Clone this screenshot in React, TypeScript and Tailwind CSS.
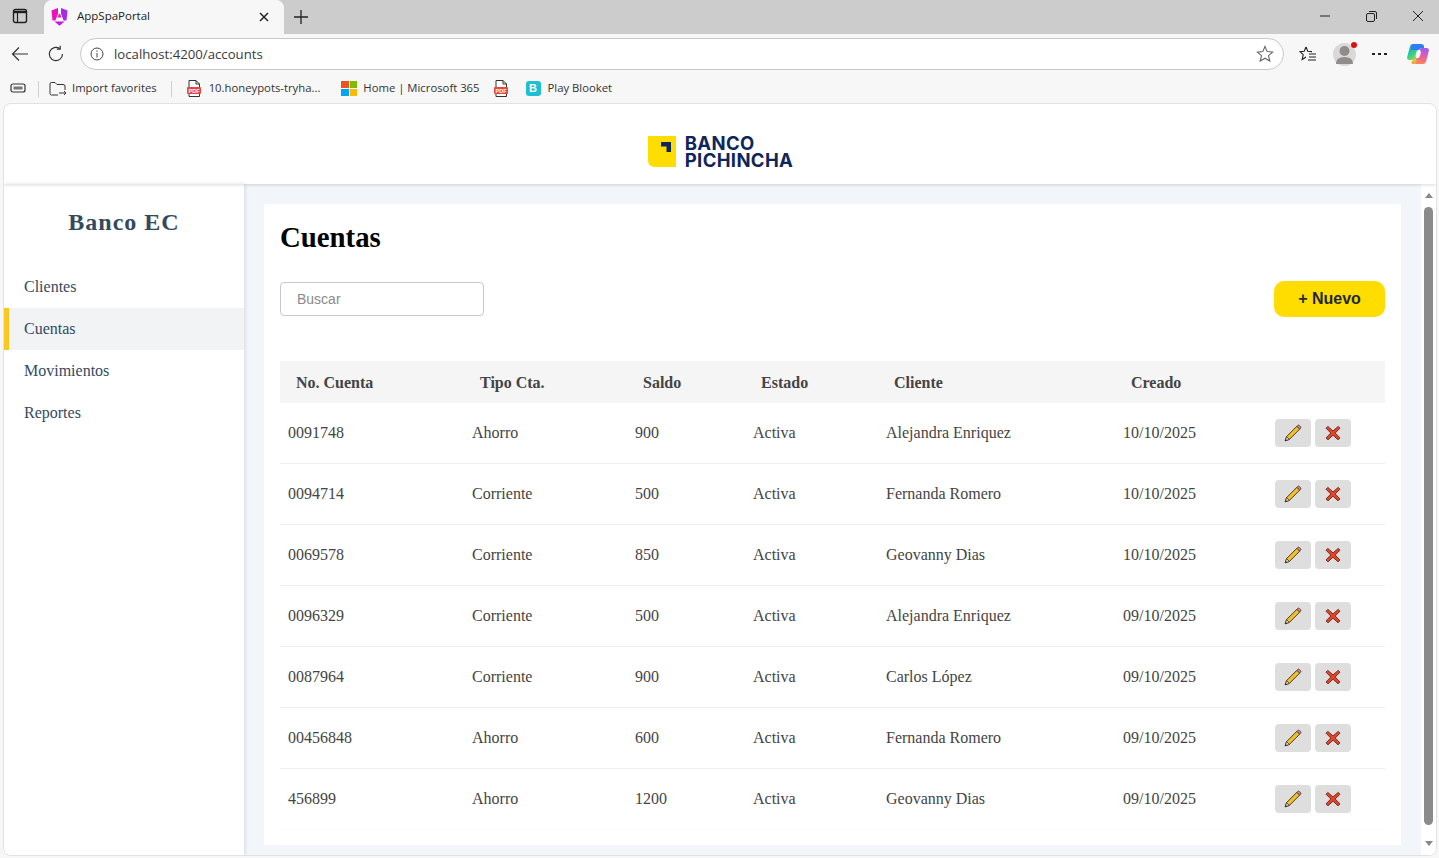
import React from 'react';

const accounts = [
  { no: '0091748', tipo: 'Ahorro', saldo: '900', cliente: 'Alejandra Enriquez', creado: '10/10/2025' },
  { no: '0094714', tipo: 'Corriente', saldo: '500', cliente: 'Fernanda Romero', creado: '10/10/2025' },
  { no: '0069578', tipo: 'Corriente', saldo: '850', cliente: 'Geovanny Dias', creado: '10/10/2025' },
  { no: '0096329', tipo: 'Corriente', saldo: '500', cliente: 'Alejandra Enriquez', creado: '09/10/2025' },
  { no: '0087964', tipo: 'Corriente', saldo: '900', cliente: 'Carlos López', creado: '09/10/2025' },
  { no: '00456848', tipo: 'Ahorro', saldo: '600', cliente: 'Fernanda Romero', creado: '09/10/2025' },
  { no: '456899', tipo: 'Ahorro', saldo: '1200', cliente: 'Geovanny Dias', creado: '09/10/2025' },
];

const PencilIcon = () => (
  <svg width="18" height="18" viewBox="0 0 18 18">
    <path d="M1.2 16.8 L2.6 12.6 L12.9 2.3 L15.7 5.1 L5.4 15.4 Z" fill="#f6c026" stroke="#2a2a2a" strokeWidth=".9" strokeLinejoin="round" />
    <path d="M12.9 2.3 L14 1.2 Q14.6 .8 15.2 1.3 L16.7 2.8 Q17.2 3.4 16.8 4 L15.7 5.1 Z" fill="#e8808a" stroke="#2a2a2a" strokeWidth=".7" />
    <path d="M1.2 16.8 L2.6 12.6 L5.4 15.4 Z" fill="#f3d6a8" stroke="#2a2a2a" strokeWidth=".7" />
    <path d="M1.1 16.9 L1.7 15.2 L2.8 16.3 Z" fill="#222" />
  </svg>
);

const CrossIcon = () => (
  <svg width="18" height="18" viewBox="0 0 18 18">
    <path d="M3.8 2.4 L9 6.9 L14.2 2.4 L16 4.2 L11.2 9 L16 13.9 L14 15.8 L9 11.2 L4 15.8 L2 13.9 L6.8 9 L2 4.2 Z" fill="#e0452a" stroke="#6b2416" strokeWidth=".9" strokeLinejoin="round" />
  </svg>
);

const AngularIcon = () => (
  <svg width="17" height="18" viewBox="0 0 17 18">
    <defs>
      <linearGradient id="ng" x1="0" y1="0" x2="1" y2="1">
        <stop offset="0" stopColor="#e40ac8" />
        <stop offset="0.55" stopColor="#c41be0" />
        <stop offset="1" stopColor="#f3273f" />
      </linearGradient>
    </defs>
    <path d="M10 0 L16.5 2.6 L15.5 12.4 L12.6 12.4 L10 5.8 Z" fill="#a52be8" />
    <path d="M7 0 L.5 2.6 L1.5 12.4 L4.4 12.4 L7 5.8 Z" fill="#ee12b6" />
    <path d="M8.5 4 L6.6 9.6 L10.4 9.6 Z" fill="#f01e9b" />
    <path d="M3.4 13.4 L13.6 13.4 L8.5 17.8 Z" fill="url(#ng)" />
    <path d="M8.5 1 L7 5.8 L10 5.8 Z" fill="#fff" />
  </svg>
);

const PdfIcon = () => (
  <svg width="16" height="17" viewBox="0 0 16 17">
    <path d="M3 .5 H10 L13.5 4 V16.5 H3 Z" fill="#fff" stroke="#333" strokeWidth="1" />
    <path d="M10 .5 V4 H13.5" fill="none" stroke="#333" strokeWidth="1" />
    <rect x="1" y="7" width="14" height="7" rx="1" fill="#e2483f" />
    <text x="8" y="12.5" textAnchor="middle" fontSize="5.5" fontWeight="700" fill="#fff" fontFamily="Liberation Sans, sans-serif">PDF</text>
  </svg>
);

const CopilotIcon = () => (
  <svg width="24" height="24" viewBox="0 0 24 24">
    <defs>
      <linearGradient id="cpa" x1="0" y1="0" x2="0.6" y2="1">
        <stop offset="0" stopColor="#1f93e6" />
        <stop offset="0.6" stopColor="#2fcf8a" />
        <stop offset="1" stopColor="#a6d94a" />
      </linearGradient>
      <linearGradient id="cpb" x1="0.6" y1="0" x2="0.4" y2="1">
        <stop offset="0" stopColor="#9b5cf0" />
        <stop offset="0.6" stopColor="#f0609a" />
        <stop offset="1" stopColor="#f78a5a" />
      </linearGradient>
    </defs>
    <path d="M7 2 H15 L11.5 15 Q10.8 18 8 18 H3.5 Q.5 18 1.2 15 L3.8 5 Q4.6 2 7 2 Z" fill="url(#cpa)" />
    <path d="M15 6 H20 Q23.5 6 22.8 9 L20.2 19 Q19.4 22 16.8 22 H9 L12.2 9 Q13 6 15 6 Z" fill="url(#cpb)" />
    <path d="M5.5 20 Q6 18 9 18 H11 L9.5 22 H7.5 Q5 22 5.5 20 Z" fill="#f4a93a" />
    <path d="M7 2 H15 Q18.5 2 18 6 H14 L13 8 H5 Q5 3 7 2 Z" fill="#2f7df0" />
    <ellipse cx="12.2" cy="12" rx="2.3" ry="4.4" transform="rotate(15 12.2 12)" fill="#f7f7f7" />
  </svg>
);

const LogoMark = () => (
  <svg width="28" height="31" viewBox="0 0 28 31">
    <path d="M0 0 H28 V31 H7 Q0 31 0 24 Z" fill="#ffdd00" />
    <path d="M13 6 H23 V16 H18.5 V10.5 H13 Z" fill="#0f265c" />
  </svg>
);

const tdClass = 'border-b border-[#eeeeee] px-2 align-middle';
const lastTdClass = 'border-b border-[#fbfbfb] px-2 align-middle';
const thClass = 'px-4 pt-[1px] text-left font-bold text-[#444]';

export default function App() {
  return (
    <div className="flex h-screen w-full flex-col overflow-hidden bg-[#f7f7f7] font-['Liberation_Serif',serif]">
      {/* Tab strip */}
      <div className="flex h-[34px] shrink-0 items-end bg-[#cccccc] font-['Open_Sans',sans-serif]">
        <div className="flex h-[34px] w-11 items-center justify-center pb-0.5 pr-[4px]">
          <svg width="16" height="16" viewBox="0 0 16 16" fill="none" stroke="#1f1f1f">
            <rect x="1.5" y="1.5" width="13" height="13" rx="2" strokeWidth="1.4" />
            <path d="M1.5 4 H14.5" strokeWidth="2.4" />
            <path d="M5.5 3 V14" strokeWidth="1.2" />
          </svg>
        </div>
        <div className="flex h-[34px] w-[240px] items-center rounded-t-lg bg-[#f7f7f7] pb-[1px] pl-[7px] pr-[14px]">
          <AngularIcon />
          <span className="ml-[9px] flex-1 pb-[1px] text-[11.5px] text-[#222]">AppSpaPortal</span>
          <svg width="12" height="12" viewBox="0 0 12 12" stroke="#222" strokeWidth="1.5">
            <path d="M2 2 L10 10 M10 2 L2 10" />
          </svg>
        </div>
        <div className="flex h-[34px] w-[34px] items-center justify-center">
          <svg width="16" height="16" viewBox="0 0 16 16" stroke="#222" strokeWidth="1.3">
            <path d="M8 1 V15 M1 8 H15" />
          </svg>
        </div>
        <div className="flex-1" />
        <div className="flex h-[34px] items-center pb-0.5 pr-[15px]">
          <svg className="mr-[36px]" width="10" height="10" viewBox="0 0 10 10" stroke="#222">
            <path d="M0 5 H10" />
          </svg>
          <svg className="mr-[35px]" width="11" height="11" viewBox="0 0 11 11" fill="none" stroke="#222">
            <rect x=".5" y="2.5" width="8" height="8" rx="1.5" />
            <path d="M3 .5 H9 Q10.5 .5 10.5 2 V8" />
          </svg>
          <svg width="12" height="12" viewBox="0 0 12 12" stroke="#222">
            <path d="M1 1 L11 11 M11 1 L1 11" />
          </svg>
        </div>
      </div>

      {/* Address bar */}
      <div className="flex h-[40px] shrink-0 items-center font-['Open_Sans',sans-serif]">
        <div className="flex w-[80px] items-center pl-[11px]">
          <svg width="18" height="16" viewBox="0 0 18 16" fill="none" stroke="#333" strokeWidth="1.2">
            <path d="M17 8 H1.5 M8 1.5 L1.5 8 L8 14.5" />
          </svg>
          <svg className="ml-[18px]" width="18" height="18" viewBox="0 0 18 18" fill="none" stroke="#333" strokeWidth="1.2">
            <path d="M15.5 9 A6.6 6.6 0 1 1 12.8 3.7" />
            <path d="M13.2 .8 V4.2 H9.8" />
          </svg>
        </div>
        <div className="flex h-[32px] w-[1204px] items-center rounded-full border border-[#c9c9c9] bg-white pl-[9px] pr-[9px]">
          <svg width="14" height="14" viewBox="0 0 14 14" fill="none" stroke="#444">
            <circle cx="7" cy="7" r="6" />
            <path d="M7 6 V10.5 M7 3.5 V4.8" />
          </svg>
          <span className="ml-[10px] flex-1 pt-[1px] text-[13.2px] text-[#3a3a3a]">localhost:4200/accounts</span>
          <svg width="18" height="18" viewBox="0 0 18 18" fill="none" stroke="#666" strokeWidth="1.1">
            <path d="M9 1.5 L11.2 6.6 L16.6 7.1 L12.5 10.7 L13.8 16 L9 13.2 L4.2 16 L5.5 10.7 L1.4 7.1 L6.8 6.6 Z" />
          </svg>
        </div>
        <div className="flex flex-1 items-center pl-[15px]">
          <svg width="18" height="18" viewBox="0 0 18 18" fill="none" stroke="#222" strokeWidth="1.1">
            <path d="M7 2 L8.8 6.2 L13 6.6 M7 2 L5.2 6.2 L1 6.6 L4.2 9.6 L3.2 14.5 L7 12 M10 9 H17 M10 12 H17 M9 15 H17" />
          </svg>
          <div className="relative ml-[16px] flex h-[23px] w-[23px] items-center justify-center overflow-visible rounded-full bg-[#d9d9d9]">
            <svg width="17" height="19" viewBox="0 0 17 19" fill="#8f8c8a">
              <circle cx="8.5" cy="6" r="5" />
              <path d="M0 19 Q0 12 8.5 12 Q17 12 17 19 Z" />
            </svg>
            <span className="absolute -right-[1px] -top-[1px] h-[6px] w-[6px] rounded-full bg-[#e01010]" />
          </div>
          <div className="ml-[16px] flex items-center gap-[3px]">
            <span className="h-[2px] w-[3px] bg-[#222]" />
            <span className="h-[2px] w-[3px] bg-[#222]" />
            <span className="h-[2px] w-[3px] bg-[#222]" />
          </div>
          <div className="ml-[19px] flex">
            <CopilotIcon />
          </div>
        </div>
      </div>

      {/* Favorites bar */}
      <div className="flex h-[29px] shrink-0 items-center pl-[10px] font-['Open_Sans',sans-serif] text-[11.3px] text-[#333]">
        <svg width="17" height="13" viewBox="0 0 17 13" fill="none" stroke="#333" strokeWidth="1.2">
          <rect x="1" y="2" width="14" height="8" rx="2" />
          <rect x="3.5" y="4.5" width="9" height="3" fill="#777" stroke="none" />
        </svg>
        <span className="ml-[11px] h-[16px] w-px bg-[#d0d0d0]" />
        <svg className="ml-[10px]" width="18" height="16" viewBox="0 0 18 16" fill="none" stroke="#333" strokeWidth="1">
          <path d="M9 14 H2.5 Q1 14 1 12.5 V3 Q1 1.5 2.5 1.5 H6 L8 3.5 H14 Q16 3.5 16 5 V9" />
          <path d="M10 12 H17 M15 10 L17 12 L15 14" />
        </svg>
        <span className="ml-[5px]">Import favorites</span>
        <span className="ml-[14px] h-[16px] w-px bg-[#d0d0d0]" />
        <span className="ml-[14px] flex"><PdfIcon /></span>
        <span className="ml-[7px]">10.honeypots-tryha...</span>
        <span className="ml-[21px] grid h-[15px] w-[16px] grid-cols-2 gap-px">
          <span className="bg-[#f25022]" />
          <span className="bg-[#7fba00]" />
          <span className="bg-[#00a4ef]" />
          <span className="bg-[#ffb900]" />
        </span>
        <span className="ml-[6px]">Home | Microsoft 365</span>
        <span className="ml-[13px] flex"><PdfIcon /></span>
        <span className="ml-[17px] flex h-[15px] w-[15px] items-center justify-center rounded-[3px] bg-[#1cc0d2] font-['Liberation_Sans',sans-serif] text-[11px] font-bold text-white">B</span>
        <span className="ml-[7px]">Play Blooket</span>
      </div>

      {/* Page */}
      <div className="ml-[3px] mr-[2px] mb-[2px] flex min-h-0 flex-1 flex-col overflow-hidden rounded-lg border border-[#e2e2e2] bg-white">
        <header className="relative z-10 flex h-[80px] shrink-0 items-center justify-center pl-[1px] pt-[15px] shadow-[0_1px_3px_rgba(0,0,0,0.15)]">
          <LogoMark />
          <div className="ml-[9px] font-['Inter',sans-serif] text-[18.5px] font-bold leading-[17px] tracking-[0.35px] text-[#0f265c]">
            <div>BANCO</div>
            <div>PICHINCHA</div>
          </div>
        </header>

        <div className="flex min-h-0 flex-1">
          <aside className="relative z-[5] flex w-[240px] shrink-0 flex-col bg-white shadow-[1px_0_4px_rgba(0,0,0,0.12)]">
            <h1 className="mt-[24px] text-center text-2xl font-bold leading-[28px] tracking-[1px] text-[#34495e]">Banco EC</h1>
            <nav className="mt-[30px] flex flex-col text-base text-[#34495e]">
              <a className="flex h-[42px] items-center pl-5">Clientes</a>
              <a className="flex h-[42px] items-center border-l-[5px] border-[#fdc71f] bg-[#f1f3f5] pl-[15px]">Cuentas</a>
              <a className="flex h-[42px] items-center pl-5">Movimientos</a>
              <a className="flex h-[42px] items-center pl-5">Reportes</a>
            </nav>
          </aside>

          <main className="flex min-w-0 flex-1 bg-[#f2f5f9]">
            <div className="min-w-0 flex-1 px-5 py-5">
              <section className="h-[641px] bg-white px-4 pt-4">
                <h2 className="text-[28.8px] font-bold leading-[34px] text-black">Cuentas</h2>
                <div className="mt-[27px] flex items-center justify-between">
                  <input
                    placeholder="Buscar"
                    className="h-[34px] w-[204px] rounded border border-[#c8c8c8] px-4 font-['Liberation_Sans',sans-serif] text-sm outline-none placeholder:text-[#8a8a8a]"
                  />
                  <button className="h-[36px] w-[111px] rounded-[10px] bg-[#ffdd00] font-['Liberation_Sans',sans-serif] text-base font-bold text-[#1f2937]">
                    + Nuevo
                  </button>
                </div>

                <table className="mt-[44px] w-[1105px] table-fixed border-separate border-spacing-0 text-base text-[#444]">
                  <colgroup>
                    <col className="w-[184px]" />
                    <col className="w-[163px]" />
                    <col className="w-[118px]" />
                    <col className="w-[133px]" />
                    <col className="w-[237px]" />
                    <col className="w-[144px]" />
                    <col className="w-[126px]" />
                  </colgroup>
                  <thead>
                    <tr className="h-[42px] bg-[#f5f5f5]">
                      <th className={thClass}>No. Cuenta</th>
                      <th className={thClass}>Tipo Cta.</th>
                      <th className={thClass}>Saldo</th>
                      <th className={thClass}>Estado</th>
                      <th className={thClass}>Cliente</th>
                      <th className={thClass}>Creado</th>
                      <th />
                    </tr>
                  </thead>
                  <tbody>
                    {accounts.map((a, i) => {
                      const cell = i < accounts.length - 1 ? tdClass : lastTdClass;
                      return (
                        <tr key={a.no} className="h-[61px]">
                          <td className={cell}>{a.no}</td>
                          <td className={cell}>{a.tipo}</td>
                          <td className={cell}>{a.saldo}</td>
                          <td className={cell}>Activa</td>
                          <td className={cell}>{a.cliente}</td>
                          <td className={cell}>{a.creado}</td>
                          <td className={cell}>
                            <div className="flex gap-1 pl-[8px]">
                              <button className="flex h-[28px] w-[36px] items-center justify-center rounded bg-[#dedede]"><PencilIcon /></button>
                              <button className="flex h-[28px] w-[36px] items-center justify-center rounded bg-[#dedede]"><CrossIcon /></button>
                            </div>
                          </td>
                        </tr>
                      );
                    })}
                  </tbody>
                </table>
              </section>
            </div>

            {/* Scrollbar */}
            <div className="flex w-[15px] shrink-0 flex-col items-center bg-white pt-[9px]">
              <span className="h-0 w-0 border-x-[4px] border-b-[5px] border-x-transparent border-b-[#888]" />
              <span className="mt-[9px] h-[618px] w-[9px] rounded-full bg-[#8b8b8b]" />
              <span className="mt-[16px] h-0 w-0 border-x-[4px] border-t-[5px] border-x-transparent border-t-[#888]" />
            </div>
          </main>
        </div>
      </div>
    </div>
  );
}
